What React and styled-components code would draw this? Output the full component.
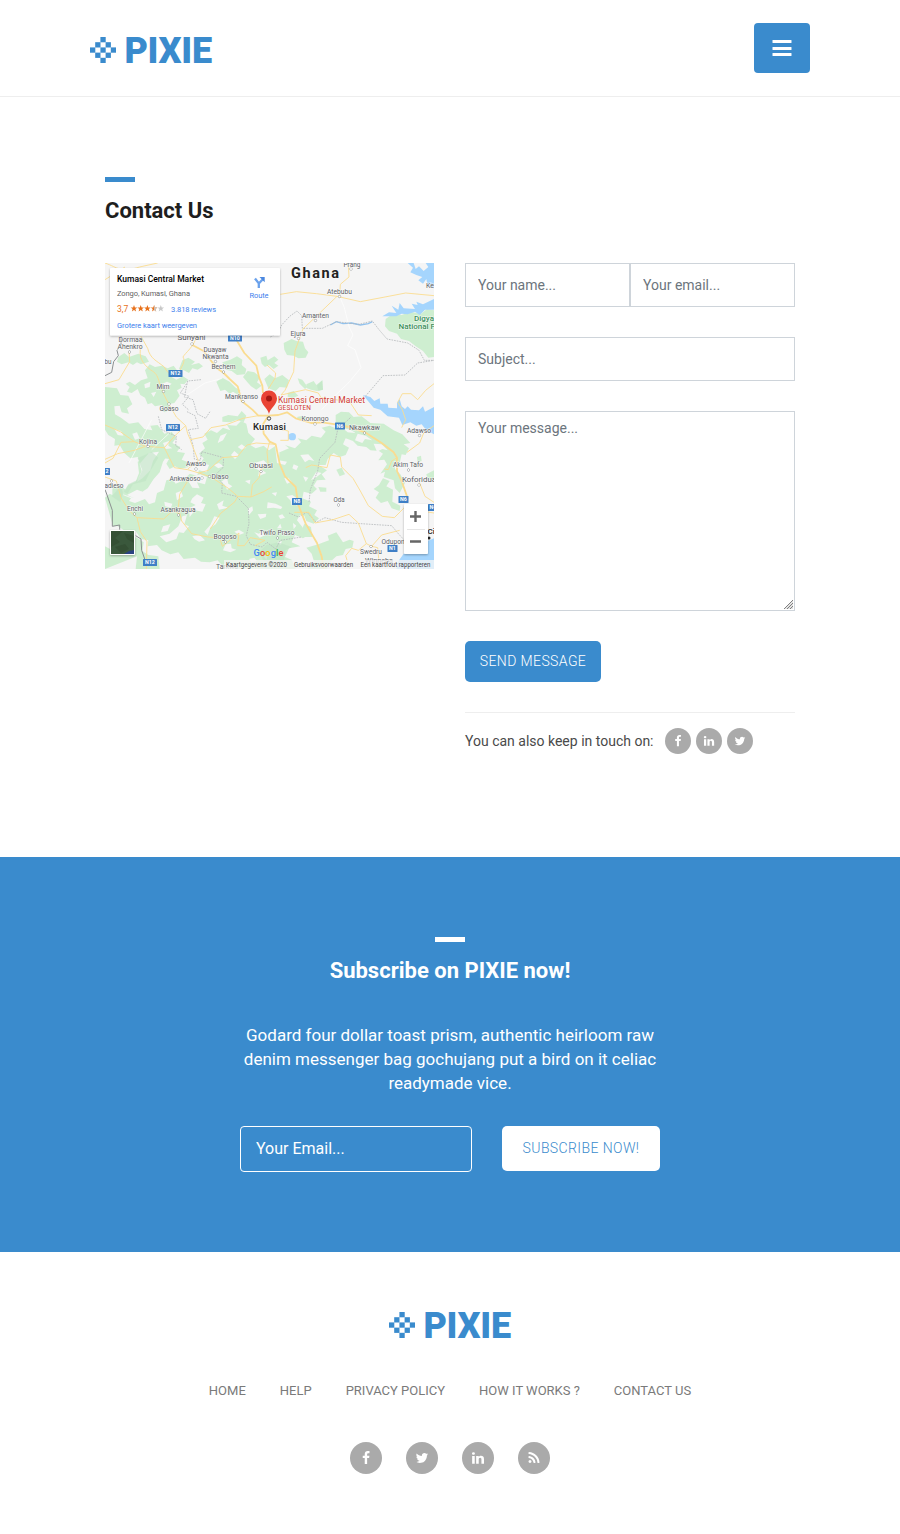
import React from 'react';
import styled, { createGlobalStyle } from 'styled-components';

const BLUE = '#3a8bcd';

const GlobalStyle = createGlobalStyle`
  *, *::before, *::after { box-sizing: border-box; }
  body { margin: 0; background: #fff; color: #4a4a4a; font-family: Roboto, "Liberation Sans", sans-serif; font-size: 14px; line-height: 1.5; }
  input, textarea, button { font-family: inherit; margin: 0; outline: none; }
`;

const Header = styled.header`
  height: 97px;
  border-bottom: 1px solid #eee;
`;
const Container = styled.div`
  width: 720px;
  margin: 0 auto;
  display: flex;
  justify-content: space-between;
  align-items: flex-start;
  padding-top: 23px;
`;
const Brand = styled.a`
  display: flex;
  align-items: center;
  width: 122px;
  height: 26px;
  color: ${BLUE};
  margin-top: ${(p) => p.$top || 0}px;
`;
const BrandName = styled.span`
  font-size: 36px;
  line-height: 26px;
  font-weight: 900;
  margin-left: 8.4px;
  padding-top: 1px;
  letter-spacing: -0.25px;
`;
const MenuButton = styled.button`
  width: 56px;
  height: 50px;
  border: 0;
  border-radius: 4px;
  background: ${BLUE};
  display: flex;
  align-items: center;
  justify-content: center;
  padding: 0;
`;

const Contact = styled.section`
  width: 690px;
  height: 760px;
  margin: 0 auto;
  padding-top: 80px;
`;
const Accent = styled.div`
  width: 30px;
  height: 5px;
  background: ${(p) => p.$color || BLUE};
`;
const Title = styled.h1`
  margin: 15px 0 0;
  font-size: 22px;
  font-weight: 700;
  line-height: 27px;
  color: ${(p) => p.$color || '#1e1e1e'};
`;
const Columns = styled.div`
  display: grid;
  grid-template-columns: 330px 330px;
  column-gap: 30px;
  margin-top: 39px;
`;
const MapFrame = styled.svg`
  display: block;
  width: 329px;
  height: 306px;
  font-family: Roboto, sans-serif;
`;
const Form = styled.form`
  display: flex;
  flex-direction: column;
  gap: 30px;
  align-items: stretch;
`;
const Pair = styled.div`
  display: flex;
`;
const Field = styled.input`
  width: 100%;
  min-width: 0;
  flex: 1;
  height: 44px;
  min-height: 44px;
  padding: 6px 12px;
  border: 1px solid #ced4da;
  border-radius: 0;
  background: #fff;
  font-size: 14px;
  &::placeholder { color: #6c757d; opacity: 1; }
`;
const Message = styled.textarea`
  display: block;
  width: 100%;
  height: 200px;
  padding: 6px 12px;
  border: 1px solid #ced4da;
  font-size: 14px;
  line-height: 21px;
  &::placeholder { color: #6c757d; opacity: 1; }
  &::-webkit-resizer {
    background:
      linear-gradient(135deg, #fff 48%, transparent 48%) right 1px bottom 1px / 9px 9px no-repeat,
      repeating-linear-gradient(135deg, #808080 0 0.7px, #e4e4e4 0.7px 2.121px) right 1px bottom 1px / 9px 9px no-repeat;
  }
`;
const SendButton = styled.button`
  align-self: flex-start;
  width: 136px;
  height: 41px;
  padding: 0 0 2px;
  border: 0;
  border-radius: 5px;
  background: ${BLUE};
  color: #fff;
  font-size: 14px;
  font-weight: 300;
  letter-spacing: 0.4px;
`;
const TouchRow = styled.div`
  border-top: 1px solid #eee;
  padding-top: 15px;
  display: flex;
  align-items: center;
  color: #4a4a4a;
`;
const SocialGroup = styled.div`
  display: flex;
  gap: ${(p) => p.$gap}px;
  margin-left: ${(p) => p.$left || 0}px;
`;
const Social = styled.a`
  width: ${(p) => p.$size}px;
  height: ${(p) => p.$size}px;
  border-radius: 50%;
  background: #aaa;
  display: flex;
  align-items: center;
  justify-content: center;
`;

const Subscribe = styled.section`
  height: 395px;
  padding-top: 80px;
  background: ${BLUE};
  color: #fff;
  display: flex;
  flex-direction: column;
  align-items: center;
`;
const Pitch = styled.p`
  width: 420px;
  margin: 39px 0 0;
  text-align: center;
  font-size: 17px;
  line-height: 24px;
  color: #fff;
`;
const SubscribeForm = styled.form`
  width: 420px;
  display: flex;
  justify-content: space-between;
  align-items: flex-start;
  margin-top: 31px;
`;
const EmailField = styled.input`
  width: 232px;
  height: 46px;
  padding: 0 15px 2px;
  border: 1px solid #fff;
  border-radius: 4px;
  background: transparent;
  font-size: 16px;
  color: #fff;
  &::placeholder { color: #fff; opacity: 1; }
`;
const SubscribeButton = styled.button`
  width: 158px;
  height: 45px;
  padding: 0 0 2px;
  border: 0;
  border-radius: 5px;
  background: #fff;
  color: ${BLUE};
  font-size: 14px;
  font-weight: 300;
  letter-spacing: 0.4px;
`;

const Footer = styled.footer`
  height: 282px;
  padding-top: 60px;
  display: flex;
  flex-direction: column;
  align-items: center;
`;
const FooterNav = styled.nav`
  display: flex;
  gap: 34px;
  margin: 42px 0 41px;
  font-size: 13px;
  line-height: 21px;
  color: #7a7a7a;
`;

const ICONS = {
  facebook: 'M1343 12v264h-157q-86 0-116 36t-30 108v189h293l-39 296h-254v759h-306v-759h-255v-296h255v-218q0-186 104-288.500t277-102.500q147 0 228 12z',
  twitter: 'M1684 408q-67 98-162 167 1 14 1 42 0 130-38 259.500t-115.500 248.500-184.500 210.500-258 146-323 54.500q-271 0-496-145 35 4 78 4 225 0 401-138-105-2-188-64.500t-114-159.500q33 5 61 5 43 0 85-11-112-23-185.500-111.500t-73.500-205.500v-4q68 38 146 41-66-44-105-115t-39-154q0-88 44-163 121 149 294.500 238.500t371.500 99.500q-8-38-8-74 0-134 94.500-228.500t228.500-94.500q140 0 236 102 109-21 205-78-37 115-142 178 93-10 186-50z',
  linkedin: 'M477 625v991h-330v-991h330zm21-306q1 73-50.500 122t-135.500 49h-2q-82 0-132-49t-50-122q0-74 51.500-122.500t134.500-48.500 133 48.500 51 122.500zm1166 729v568h-329v-530q0-105-40.500-164.500t-126.500-59.500q-63 0-105.500 34.500t-63.500 85.500q-11 30-11 81v553h-329q2-399 2-647t-1-296l-1-48h329v144h-2q20-32 41-56t56.500-52 87-43.500 114.500-15.500q171 0 275 113.500t104 332.500z',
  rss: 'M576 1344q0 80-56 136t-136 56-136-56-56-136 56-136 136-56 136 56 56 136zm512 123q2 28-17 48-18 21-47 21h-135q-25 0-43-16.500t-20-41.500q-22-229-184.500-391.500t-391.500-184.500q-25-2-41.500-20t-16.500-43v-135q0-29 21-47 17-17 43-17h5q160 13 306 80.500t259 181.500q114 113 181.500 259t80.500 306zm512 2q2 27-18 47-18 20-46 20h-143q-26 0-44.500-17.500t-19.500-42.500q-12-215-101-408.500t-231.500-336-336-231.500-408.500-102q-25-1-42.500-19.500t-17.500-43.500v-143q0-28 20-46 18-18 44-18h3q262 13 501.500 120t425.500 294q187 186 294 425.500t120 501.500z',
};

function SocialLink({ name, size, glyph }) {
  return (
    <Social $size={size} aria-label={name}>
      <svg width={glyph} height={glyph} viewBox="0 0 1792 1792" fill="#fff"><path d={ICONS[name]} /></svg>
    </Social>
  );
}

const CELLS = [[2, 0], [1, 1], [3, 1], [0, 2], [2, 2], [4, 2], [1, 3], [3, 3], [2, 4]];

function Logo({ top }) {
  return (
    <Brand $top={top}>
      <svg width="26" height="26" viewBox="0 0 26 26" fill={BLUE}>
        {CELLS.map(([x, y]) => <rect key={`${x}${y}`} x={x * 5.2} y={y * 5.2} width="5.3" height="5.3" />)}
      </svg>
      <BrandName>PIXIE</BrandName>
    </Brand>
  );
}

/* Terrain outlines are in a 987 x 918 grid, scaled to a third. */
const FOREST = [
  '40,282 58,270 72,282 100,272 122,280 132,296 108,304 96,298 84,306 70,298 50,304 36,296',
  '98,378 80,390 66,386 74,372 62,362 74,356 90,366 108,352 128,346 120,322 134,304 150,312 170,308 188,316 206,308 216,322 196,340 214,350 234,340 250,350 238,364 226,362 230,374 216,382 224,398 208,420 190,424 194,440 180,448 166,440 172,426 150,430 140,420 128,424 120,404 106,396',
  '232,292 250,284 270,296 258,306 282,300 294,310 278,320 262,316 252,330 236,322 222,318',
  '352,298 376,290 396,280 412,290 410,306 424,318 420,334 396,336 380,324 362,320',
  '334,356 352,344 374,356 392,374 406,382 400,396 384,386 374,392 360,380 346,384',
  '428,324 448,328 466,342 456,358 470,368 454,380 438,370 426,356 414,342',
  '466,284 484,278 488,292 508,280 520,290 508,300 520,308 506,318 492,306 480,312 470,302',
  '478,348 494,334 510,346 532,336 552,352 546,374 524,372 512,384 490,376',
  '536,240 560,228 574,234 594,236 600,256 610,268 602,284 580,286 566,278 546,276 538,260',
  '578,346 592,350 608,372 600,378 584,362', '604,364 626,354 634,366 652,352 654,380 636,384 618,380 606,376',
  '548,390 566,384 580,398 562,406 548,402',
  '0,372 36,376 46,396 70,398 82,424 66,436 72,452 50,448 44,428 28,430 30,454 48,464 72,482 100,478 118,498 142,502 136,488 158,486 178,512 200,506 214,524 202,540 226,552 216,566 240,570 230,590 250,598 250,612 226,618 210,610 194,618 184,602 192,588 168,584 160,600 136,590 122,604 106,600 98,582 76,586 58,570 44,546 28,548 30,528 10,516 0,500',
  '164,564 186,578 174,596 164,628 146,648 128,676 112,686 96,680 66,696 88,706 54,694 70,666 92,656 102,630 98,596 122,584 136,566',
  '0,704 14,692 22,696 22,674 44,666 62,680 54,696 78,706 72,714 90,720 120,708 132,724 150,718 156,690 176,682 184,652 202,648 212,662 236,652 254,632 276,638 282,622 304,628 312,606 288,598 296,586 282,572 300,556 292,540 308,530 298,512 318,502 336,510 354,494 376,502 366,486 394,488 408,474 424,482 430,510 450,528 436,546 452,556 476,548 492,562 510,550 524,568 552,556 540,546 570,556 588,538 578,526 604,532 620,518 648,524 662,506 650,494 674,488 692,496 692,456 708,446 732,448 746,462 770,460 796,480 836,482 866,502 892,514 916,540 896,544 912,556 902,576 890,574 884,600 866,594 870,618 886,634 900,660 884,690 870,676 866,652 836,642 840,626 826,632 846,604 838,590 820,592 834,572 822,564 796,562 784,552 758,548 744,534 722,526 714,544 732,554 722,576 704,582 686,570 668,588 662,606 640,606 666,622 650,634 662,650 636,652 626,668 636,678 620,692 596,686 592,706 618,716 612,730 636,742 628,756 642,766 626,782 604,774 598,758 584,756 576,772 592,792 604,820 594,826 570,816 560,838 586,850 552,856 540,882 560,890 572,918 360,918 338,892 314,898 288,896 270,884 236,888 220,868 196,874 170,862 156,846 128,850 130,832 108,828 92,804 64,806 36,788 24,790',
  '352,462 370,456 398,460 410,444 424,458 416,478 396,470 376,478 352,476',
  '640,844 672,832 668,818 694,808 714,838 734,830 746,834 742,854 722,858 714,876 694,880 672,900 666,918 608,918 628,898 620,872 604,854',
  '588,806 598,782 618,792 622,822 598,822', '834,646 854,654 844,670 864,680 862,716 886,728 884,744 860,736 848,714 828,720 812,704 822,688 806,678 822,666',
  '694,620 710,614 720,634 704,640', '868,648 886,646 892,668 878,672', '640,672 664,674 664,686 646,686',
  '842,168 864,152 890,156 916,146 948,152 966,138 987,142 987,282 970,284 954,264 932,250 912,234 888,228 876,212 852,204 840,190',
  '92,822 116,838 112,864 130,876 160,880 164,918 92,918 96,880 0,918 0,850 22,862 54,850 78,852',
  '936,582 948,578 950,594 938,598', '964,634 987,622 987,650 968,650', '576,462 592,458 608,464 598,472 580,470',
];
const CLEARINGS = [
  '132,570 162,566 144,594 136,622 112,646 96,656 110,624 104,602', '262,706 276,694 296,704 288,720 302,724 292,746 270,742 254,762 252,736 272,726 256,718',
  '232,760 246,756 238,784 252,790 236,810 222,808 214,828 184,838 164,820 194,812 220,790', '264,640 286,634 306,642 300,664 276,658 284,676 262,674 252,658',
  '328,760 344,764 332,784 316,794 308,816 298,806 316,786', '348,656 366,644 370,662 382,670 366,680 360,666', '346,518 366,510 354,532 338,540',
  '448,600 476,592 488,604 470,620 484,630 460,640 462,622 442,612', '510,546 524,558 522,592 546,596 540,606 516,600', '428,738 442,730 444,742 432,756',
  '458,754 484,752 482,762 466,768', '488,718 512,722 532,732 528,738 506,734 486,736', '556,708 572,720 560,728', '544,700 562,696 584,712 576,728 562,718',
  '520,758 532,754 540,764 526,768', '516,796 526,782 530,796', '398,552 410,544 424,554 410,560', '586,576 610,574 628,594 612,590 600,598',
  '634,626 650,630 632,644 618,652', '758,512 782,518 802,532 780,528 772,540 750,532', '806,542 830,544 848,562 832,558 816,566', '712,494 736,500 752,510 728,508',
  '96,692 110,684 106,704 88,704', '174,790 196,784 188,804 168,808', '262,820 284,816 300,832 282,836 268,828', '362,844 378,842 380,856 394,860 376,868 354,862',
  '336,724 356,712 352,728 370,734 342,740', '212,690 228,684 234,700 216,712', '178,716 202,722 198,734 180,730', '388,806 402,800 418,810 402,816',
  '448,808 462,812 470,804 486,814 464,824', '118,364 136,356 134,372 120,376', '168,364 186,356 200,362 184,376', '138,390 154,386 146,402',
  '28,498 48,504 56,518 38,516', '112,536 130,530 140,542 126,550', '174,540 192,534 190,548 202,556 182,558', '82,512 96,508 104,526 90,530',
  '516,838 530,834 528,846', '432,888 448,884 456,894 440,900', '474,876 488,878 484,890', '532,806 548,804 554,812 540,818', '420,654 436,650 434,664',
  '388,564 402,576 390,588 378,576', '326,606 342,600 356,610 340,616', '538,646 550,644 560,656 546,662', '566,604 580,610 574,622 562,616', '594,640 610,644 602,656',
  '500,690 516,688 512,700', '564,780 574,788 566,798',
];
const TINTS = ['98,586 140,566 160,584 138,620 122,654 84,664 68,692 56,686 70,664 98,650 112,622', '484,846 520,838 560,852 542,862 536,896 500,918 478,898 462,868', '636,368 652,352 654,380 640,384', '20,700 48,668 54,690 46,718'];
const ROADS = [
  ['M275 218C269 250 240 270 234 282C244 296 226 314 224 326C224 344 196 348 178 312C154 292 136 288 128 256L108 220M108 250C100 280 110 300 136 320C170 340 150 350 192 424L214 462L242 488', 1],
  ['M262 246L296 264L334 314L356 330L374 348L398 370L410 414L442 440L460 458L490 458', 2],
  ['M395 232L418 270L454 308L462 342L472 368L474 390', 2],
  ['M490 458L474 484L476 512L494 536L512 544L524 602L540 640L572 672L580 726L602 782L636 840L650 880L656 918', 2],
  ['M490 458L520 456L546 448L572 466L618 480L652 478L692 484L732 492L780 508L830 540L866 568L876 584L876 624L892 660L906 700', 2],
  ['M0 486L46 506L88 536L122 550L178 554L210 518L242 488L248 512L256 530L294 522L318 494L362 486L414 466L460 458', 1],
  ['M178 554L208 614L248 620L282 630L318 642L370 676L398 700L438 702L476 686L500 672', 1],
  ['M494 536L486 566L490 608L468 618L462 644L442 666L438 702M512 544L454 540L426 546L398 580L352 584L310 622L282 630', 1],
  ['M248 654L224 694L220 734L230 774L260 812L308 822L336 824M398 700L390 716L346 752L316 798', 1],
  ['M0 589L38 572L88 562L122 550M0 642L34 654L48 704L68 736L82 752L96 764L176 768L204 742L224 754M96 764L106 806L126 836L124 918', 1],
  ['M526 94L574 86L634 92L696 100L766 116L840 102L902 90L987 98M696 100L642 152L594 198L570 264L566 326L540 382L528 396', 1],
  ['M730 0L732 42L706 64L704 98', 1],
  ['M0 0C40 14 44 30 104 12L158 0M0 50L60 12M0 362L42 350L74 296L72 266M490 378L510 346L512 330L486 306M528 396L602 380L640 390L648 404L734 416', 1],
  ['M248 618L280 594L256 532M88 536L48 538L24 586L0 600', 1],
  ['M346 830L352 850L402 810L398 848L418 848L436 824L480 832L450 848', 1],
  ['M568 748L612 748L630 780L684 770L732 754L760 780L784 842L800 850L818 854L824 918', 1],
  ['M602 614L620 606L666 614L676 576L706 582L710 612L744 646L766 684L790 728L832 760L868 764L896 736L987 750', 1],
  ['M784 842L760 862L740 856L722 878L734 918M800 850L830 816L884 802', 1],
  ['M530 500L550 504L550 532L526 532M734 416L760 456L800 458M890 494L902 470L892 440L878 418L892 392L918 392L938 410L962 382L987 362', 1],
  ['M876 584L860 594L850 620L838 618M906 568L944 540L956 510L987 488M940 650L960 700L987 718', 1],
];
const BOUNDARIES = [
  '496,222 520,208 530,186 554,160 576,144 590,158 592,196 652,196 694,176 762,184 802,174 822,200 846,228 908,240 942,262 958,292 987,292',
  '776,406 834,338 900,336 938,300 987,292', '288,350 248,354 238,402 264,410 276,452 302,466 316,444', '246,446 270,458 280,496 250,500 264,546 268,588 286,592 290,566 356,584 354,614 330,636 352,660 350,690',
  '350,690 394,700 430,736 432,782 424,818 436,844 472,852 486,838 512,858 526,832 590,822',
  '736,464 698,500 690,538 644,586 638,624 616,680 612,718', '552,750 580,762 606,748 634,778 660,764 710,778 768,782 860,788 880,812 906,840 938,842', '160,460 170,500 214,520 212,548 230,560', '250,440 232,424 252,400 226,390 246,360',
];

const TOWNS = [
  ['Prang', 247, 3.5, 246, 6, 17], ['Atebubu', 234.500, 30.500, 234.500, 33.500, 25], ['Amanten', 210.500, 54.500, 210.500, 57.500, 27], ['Ejura', 193, 72.500, 193.500, 75.500, 15],
  ['Sunyani', 86.500, 77, 87, 81, 28], ['Dormaa', 25.500, 79, 0, 0, 24], ['Ahenkro', 25, 86, 24.500, 89, 25], ['Duayaw', 110, 88.500, 0, 0, 23],
  ['Nkwanta', 110.500, 95.500, 110.500, 98.500, 26], ['Bechem', 118.500, 106, 118.500, 109, 24], ['Mim', 58, 126, 58.500, 128.500, 13], ['Goaso', 64, 148, 64, 141, 19],
  ['Mankranso', 136.500, 136, 138, 138.500, 33], ['Kojina', 43, 180.500, 43, 183.500, 18], ['Awaso', 91, 203, 91, 206, 20], ['Ankwaoso', 80, 217.500, 97, 215, 31],
  ['Diaso', 115, 215.500, 104.500, 213.500, 17], ['Enchi', 30, 248, 29.500, 251, 16], ['Asankragua', 73, 248.500, 73.500, 252, 35], ['Bogoso', 120, 276, 120.500, 279, 23],
  ['Obuasi', 156, 204.500, 156, 208.500, 24], ['Konongo', 210, 158, 210, 161, 27], ['Nkawkaw', 259.500, 166.500, 259.500, 170, 31], ['Adawso', 314, 169.500, 314.500, 172.500, 24],
  ['Akim Tafo', 303, 204, 303.500, 207, 30], ['Koforidua', 314, 218.500, 314, 222, 34], ['Oda', 234, 239, 233.500, 242, 11], ['Twifo Praso', 172, 271.500, 172.500, 275, 35],
  ['Swedru', 266, 290.500, 266, 283.500, 22], ['Oduponkpehe', 297, 280.500, 0, 0, 41], ['Winneba', 274, 299.500, 0, 0, 28], ['adieso', 9, 225, 6.500, 218, 19], ['Kete', 328, 25, 0, 0, 14], ['bu', 3, 101, 0, 0, 7],
  ['Tarkwa', 122, 306, 0, 0, 22],
];
const SHIELDS = [['N10', 130, 75], ['N12', 70.500, 110.500], ['N12', 68, 164.500], ['N12', 45, 299.500], ['N6', 235, 163], ['N8', 192, 238.500], ['N6', 298.500, 236.500], ['N4', 328, 244.500], ['N1', 287.500, 285.500], ['2', 0, 208.500]];

function StreetMap() {
  return (
    <MapFrame viewBox="0 0 329 306" role="img" aria-label="Kumasi Central Market">
      <defs>
        <filter id="lift" x="-10%" y="-10%" width="120%" height="130%">
          <feDropShadow dx="0" dy="1" stdDeviation="1.2" floodOpacity="0.3" />
        </filter>
        <clipPath id="board"><rect width="329" height="306" /></clipPath>
      </defs>
      <g clipPath="url(#board)">
        <rect width="329" height="306" fill="#f5f5f5" />
        <g transform="scale(0.33333)">
          {FOREST.map((p) => <polygon key={p} points={p} fill="#ceeed0" />)}
          {CLEARINGS.map((p) => <polygon key={p} points={p} fill="#f5f5f5" />)}
          {TINTS.map((p) => <polygon key={p} points={p} fill="#bfe5c5" fillOpacity="0.6" />)}
          <g fill="#a5d5fd">
            <path d="M908 0L924 14L916 28L934 36L952 42L940 52L954 62L964 48L968 68L987 76V0H962L970 12L956 24L942 10L932 18L926 0Z" />
            <path d="M832 160L852 148L874 150L860 128L880 140L884 120L896 136L930 138L920 122L938 126L934 116L954 124L987 108V140L960 140L944 156L930 146L908 154L890 152L874 160Z" />
            <path d="M774 396L796 402L808 414L824 406L826 422L848 422L850 434L876 436L876 420L884 408L890 430L900 438L908 430L918 440L942 442L954 430L960 446L987 432V514L964 502L950 484L934 488L916 478L892 486L882 464L848 460L826 440L806 434Z" />
            <circle cx="562" cy="521" r="11" /><path d="M550 514h14v14h-14zM987 826L948 842L918 860L896 872L882 892L874 918H987Z" />
          </g>
          <path d="M676 186L694 176L714 182L740 180L766 186L790 182L802 176" fill="none" stroke="#91c2ee" strokeWidth="4" />
          <g fill="none" stroke="#fff" strokeWidth="2.400" strokeOpacity="0.8">
            <path d="M704 100L718 134L732 190L744 216L728 248L750 260L768 314L732 358L690 398L650 440M240 400L300 360L352 346M140 560L204 500M72 600L140 470" />
          </g>
          <g fill="none" stroke="#b4b8ba" strokeWidth="2.400" strokeDasharray="5 3">
            {BOUNDARIES.map((p) => <polyline key={p} points={p} />)}
          </g>
          <g fill="none" strokeLinejoin="round">
            {ROADS.map(([d, w]) => <path key={d} d={d} stroke="#fadc90" strokeWidth={w * 2.7} />)}
            <path d="M48 220V246L36 262L40 278L26 296L20 328L0 338M0 680L4 690L22 742V790L44 786V800M92 818L108 828L110 862L124 902" stroke="#8c9091" strokeWidth="3" />
          </g>
        </g>
        <g textAnchor="middle" stroke="#fafafa" strokeWidth="1.200" strokeOpacity="0.8" paintOrder="stroke" fill="#5c6166" fontSize="6.800">
          {TOWNS.map(([n, x, y, cx, cy, w]) => (
            <g key={n}>
              {cx > 0 && <circle cx={cx} cy={cy} r="1.1" fill="#fff" stroke="#656b70" strokeOpacity="1" strokeWidth="0.700" />}
              <text x={x} y={y} fontSize={['Sunyani', 'Obuasi', 'Koforidua'].includes(n) ? 7.8 : 6.8} textLength={w} lengthAdjust="spacingAndGlyphs">{n}</text>
            </g>
          ))}
          <text x="186" y="15.200" textAnchor="start" fontSize="14.500" fontWeight="700" fill="#222" textLength="48">Ghana</text>
          <text x="164.500" y="167" fontSize="9.500" fontWeight="500" fill="#222" textLength="33">Kumasi</text>
          <text x="309" y="57.500" textAnchor="start" fontSize="8" fontWeight="500" fill="#3a8f5a">Digya</text>
          <text x="293.500" y="66.200" textAnchor="start" fontSize="8" fontWeight="500" fill="#3a8f5a">National Park</text>
          <text x="173" y="139.500" textAnchor="start" fontSize="8.500" fill="#d13a32" textLength="87">Kumasi Central Market</text>
          <text x="173" y="147" textAnchor="start" fontSize="6.500" fill="#d13a32" textLength="33">GESLOTEN</text>
          <text x="322.500" y="271" textAnchor="start" fontSize="8" fontWeight="700" fill="#333">Ci</text>
        </g>
        <circle cx="324" cy="275" r="1.500" fill="#222" />
        {SHIELDS.map(([n, x, y]) => (
          <g key={`${n}-${x}`}>
            <rect x={x - (n.length > 2 ? 7 : 5)} y={y - 3.5} width={n.length > 2 ? 14 : 10} height="7" rx="0.500" fill="#3f7fc6" />
            <text x={n === '2' ? 2 : x} y={y + 1.900} textAnchor="middle" fontSize="5.300" fontWeight="700" fill="#fff">{n}</text>
          </g>
        ))}
        <circle cx="164" cy="155.500" r="1.700" fill="#fff" stroke="#444" />
        <path d="M164 151c-1-6-8-9-8-15.500a8 8 0 0 1 16 0c0 6.500-7 9.500-8 15.500z" fill="#e94335" />
        <circle cx="164" cy="135.500" r="3" fill="#a51913" />

        <rect x="5" y="5" width="170" height="67.500" fill="#fff" rx="1" filter="url(#lift)" />
        <text x="12" y="19" fontSize="8.500" fontWeight="500" fill="#000" textLength="87">Kumasi Central Market</text>
        <text x="12" y="33" fontSize="7.500" fill="#5f5f5f" textLength="73">Zongo, Kumasi, Ghana</text>
        <text x="12" y="49" fontSize="8.500" fill="#e7711b">3,7</text>
        {[0, 1, 2, 3, 4].map((n) => (
          <path key={n} transform={`translate(${29 + n * 6.700} 45.500)`} d="M0-3.400L.9-1 3.300-.9 1.400.6 2.100 3 0 1.600-2.100 3-1.400.6-3.300-.9-.9-1z" fill={n > 3 ? '#c8c8c8' : '#e7711b'} />
        ))}
        <path d="M49.100 42.100l.9 2.400 2.400.1-1.900 1.500.7 2.400-2.100-1.400z" fill="#c8c8c8" />
        <text x="66" y="49" fontSize="7.500" fill="#427fed" textLength="45">3.818 reviews</text>
        <text x="12" y="64.500" fontSize="7.500" fill="#427fed" textLength="80">Grotere kaart weergeven</text>
        <path d="M153.800 25v-4.600l-3.800-4.900M153.800 20.500l4-4.300" fill="none" stroke="#6ba2ec" strokeWidth="2.300" />
        <path d="M154.500 14h5.200v5.200z" fill="#4b87df" />
        <text x="154" y="35" textAnchor="middle" fontSize="7.500" fill="#427fed" textLength="19">Route</text>

        <rect x="5" y="267" width="25" height="25" rx="1" fill="#fff" filter="url(#lift)" />
        <rect x="6" y="268" width="23" height="23" fill="#3a583c" />
        <path d="M6 268h12l-8 7 5 4-9 5zM19 270l10 3v7l-7-4zM10 284l10-3 4 5-8 4z" fill="#344f34" />
        <path d="M19 291l5-3 5-1v4z" fill="#2a4382" />

        <rect x="299" y="241" width="24" height="50" rx="1" fill="#fff" filter="url(#lift)" />
        <path d="M302 266.500h18" stroke="#e6e6e6" />
        <path d="M305 253.500h11M310.500 248v11M305 278.500h11" stroke="#666" strokeWidth="2.400" />

        <rect x="119" y="297" width="210" height="9" fill="#f5f5f5" fillOpacity="0.750" />
        <g fontSize="6.300" fill="#444">
          <text x="121" y="303.700" textLength="61" lengthAdjust="spacingAndGlyphs">Kaartgegevens ©2020</text>
          <text x="189" y="303.700" textLength="59" lengthAdjust="spacingAndGlyphs">Gebruiksvoorwaarden</text>
          <text x="255.500" y="303.700" textLength="70" lengthAdjust="spacingAndGlyphs">Een kaartfout rapporteren</text>
        </g>
        <text x="148.500" y="292.500" fontSize="9.300" fontWeight="500" textLength="30">
          <tspan fill="#4285f4">G</tspan><tspan fill="#ea4335">o</tspan><tspan fill="#fbbc05">o</tspan><tspan fill="#4285f4">g</tspan><tspan fill="#34a853">l</tspan><tspan fill="#ea4335">e</tspan>
        </text>
      </g>
    </MapFrame>
  );
}

export default function App() {
  return (
    <>
      <GlobalStyle />
      <Header>
        <Container>
          <Logo top={14} />
          <MenuButton aria-label="Menu">
            <svg width="20" height="16" viewBox="0 0 20 16" fill="#fff">
              <rect x="0.500" y="0" width="19" height="3" rx="0.600" />
              <rect x="0.500" y="7" width="19" height="3" rx="0.600" />
              <rect x="0.500" y="13" width="19" height="3" rx="0.600" />
            </svg>
          </MenuButton>
        </Container>
      </Header>

      <Contact>
        <Accent />
        <Title>Contact Us</Title>
        <Columns>
          <StreetMap />
          <Form>
            <Pair>
              <Field placeholder="Your name..." />
              <Field placeholder="Your email..." />
            </Pair>
            <Field placeholder="Subject..." />
            <Message placeholder="Your message..." />
            <SendButton type="button">SEND MESSAGE</SendButton>
            <TouchRow>
              You can also keep in touch on:
              <SocialGroup $gap={5} $left={11}>
                {['facebook', 'linkedin', 'twitter'].map((n) => <SocialLink key={n} name={n} size={26} glyph={12} />)}
              </SocialGroup>
            </TouchRow>
          </Form>
        </Columns>
      </Contact>

      <Subscribe>
        <Accent $color="#fff" />
        <Title as="h2" $color="#fff">Subscribe on PIXIE now!</Title>
        <Pitch>Godard four dollar toast prism, authentic heirloom raw denim messenger bag gochujang put a bird on it celiac readymade vice.</Pitch>
        <SubscribeForm>
          <EmailField placeholder="Your Email..." />
          <SubscribeButton type="button">SUBSCRIBE NOW!</SubscribeButton>
        </SubscribeForm>
      </Subscribe>

      <Footer>
        <Logo />
        <FooterNav>
          {['HOME', 'HELP', 'PRIVACY POLICY', 'HOW IT WORKS ?', 'CONTACT US'].map((t) => <span key={t}>{t}</span>)}
        </FooterNav>
        <SocialGroup $gap={24}>
          {['facebook', 'twitter', 'linkedin', 'rss'].map((n) => <SocialLink key={n} name={n} size={32} glyph={14} />)}
        </SocialGroup>
      </Footer>
    </>
  );
}
